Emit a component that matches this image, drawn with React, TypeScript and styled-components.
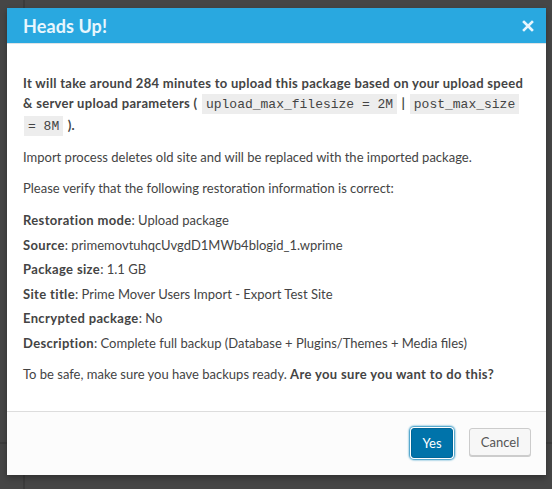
import React from "react";
import styled, { createGlobalStyle } from "styled-components";

const GlobalStyle = createGlobalStyle`
  html, body {
    margin: 0;
    padding: 0;
  }
  body {
    background-color: #464646;
    background-image:
      linear-gradient(90deg, transparent 23px, #3c3c3c 23px, #3c3c3c 25px, transparent 25px),
      linear-gradient(180deg, transparent 442px, #3d3d3d 442px, #3d3d3d 444px, transparent 444px);
    font-family: "Lato", "Liberation Sans", sans-serif;
    width: 552px;
    height: 489px;
    overflow: hidden;
  }
`;

const Page = styled.div`
  padding: 8px 6px 14px 7px;
  box-sizing: border-box;
  height: 489px;
`;

const Dialog = styled.div`
  width: 539px;
  height: 467px;
  background: #ffffff;
  display: flex;
  flex-direction: column;
  box-shadow: 0 3px 6px rgba(0, 0, 0, 0.3);
`;

const Header = styled.div`
  height: 35px;
  flex: none;
  background: #29a8e0;
  border-bottom: 1px solid #dde3e6;
  display: flex;
  align-items: center;
  justify-content: space-between;
  padding: 0 10px 0 16px;
`;

const Title = styled.h1`
  margin: 0;
  font-size: 18px;
  font-weight: 700;
  color: #e8f6fd;
  letter-spacing: 0.1px;
`;

const CloseButton = styled.button`
  border: 0;
  background: transparent;
  padding: 0;
  width: 16px;
  height: 16px;
  display: flex;
  align-items: center;
  justify-content: center;
  cursor: pointer;
`;

const Body = styled.div`
  flex: 1;
  padding: 29px 16px 0 16px;
  color: #444444;
  font-size: 13px;
  line-height: 20px;
`;

const Para = styled.p<{ $strong?: boolean; $gap?: number; $top?: number }>`
  margin: ${(p) => p.$top ?? 0}px 0 ${(p) => p.$gap ?? 11}px 0;
  font-weight: ${(p) => (p.$strong ? 700 : 400)};
  letter-spacing: ${(p) => (p.$strong ? "0.3px" : "0")};
`;

const Code = styled.code`
  font-family: "Liberation Mono", "DejaVu Sans Mono", monospace;
  font-size: 13px;
  font-weight: 400;
  letter-spacing: 0;
  background: rgba(0, 0, 0, 0.07);
  padding: 3px 4px 2px;
  margin: 0 1px;
  color: #444;
`;

const InfoRow = styled.div`
  margin: 0 0 4.6px 0;
`;

const Label = styled.strong`
  font-weight: 700;
  letter-spacing: 0.35px;
`;

const Footer = styled.div`
  height: 62px;
  flex: none;
  border-top: 1px solid #dddddd;
  background: #fcfcfc;
  display: flex;
  align-items: center;
  justify-content: flex-end;
  gap: 16px;
  padding: 0 15px 1px 0;
`;

const Button = styled.button<{ $primary?: boolean }>`
  font-family: "Lato", "Liberation Sans", sans-serif;
  font-size: 13px;
  border-radius: 3px;
  cursor: pointer;
  box-sizing: border-box;
  ${(p) =>
    p.$primary
      ? `
    height: 30px;
    width: 42px;
    background: #0073aa;
    border: 1px solid #006799;
    color: #ffffff;
    box-shadow: 0 0 0 1px #ffffff, 0 0 2px 2px #1e8cbe;
  `
      : `
    height: 28px;
    width: 62px;
    background: #f7f7f7;
    border: 1px solid #cccccc;
    color: #555555;
    box-shadow: 0 1px 0 #cccccc;
    margin-top: -2px;
  `}
`;

export default function App() {
  return (
    <>
      <GlobalStyle />
      <Page>
        <Dialog>
          <Header>
            <Title>Heads Up!</Title>
            <CloseButton aria-label="Close">
              <svg width="12" height="12" viewBox="0 0 12 12">
                <path
                  d="M2 2 L10 10 M10 2 L2 10"
                  stroke="#e8f6fd"
                  strokeWidth="2.6"
                  strokeLinecap="square"
                />
              </svg>
            </CloseButton>
          </Header>
          <Body>
            <Para $strong $gap={10}>
              It will take around 284 minutes to upload this package based on your upload speed
              <br />
              &amp; server upload parameters ( <Code>upload_max_filesize = 2M</Code> |{" "}
              <Code>post_max_size</Code>
              <br />
              <Code>= 8M</Code> ).
            </Para>
            <Para $gap={11}>
              Import process deletes old site and will be replaced with the imported package.
            </Para>
            <Para $gap={12}>
              Please verify that the following restoration information is correct:
            </Para>
            <InfoRow>
              <Label>Restoration mode</Label>: Upload package
            </InfoRow>
            <InfoRow>
              <Label>Source</Label>: primemovtuhqcUvgdD1MWb4blogid_1.wprime
            </InfoRow>
            <InfoRow>
              <Label>Package size</Label>: 1.1 GB
            </InfoRow>
            <InfoRow>
              <Label>Site title</Label>: Prime Mover Users Import - Export Test Site
            </InfoRow>
            <InfoRow>
              <Label>Encrypted package</Label>: No
            </InfoRow>
            <InfoRow>
              <Label>Description</Label>: Complete full backup (Database + Plugins/Themes + Media
              files)
            </InfoRow>
            <Para $gap={0} $top={11}>
              To be safe, make sure you have backups ready.{" "}
              <Label>Are you sure you want to do this?</Label>
            </Para>
          </Body>
          <Footer>
            <Button $primary>Yes</Button>
            <Button>Cancel</Button>
          </Footer>
        </Dialog>
      </Page>
    </>
  );
}
